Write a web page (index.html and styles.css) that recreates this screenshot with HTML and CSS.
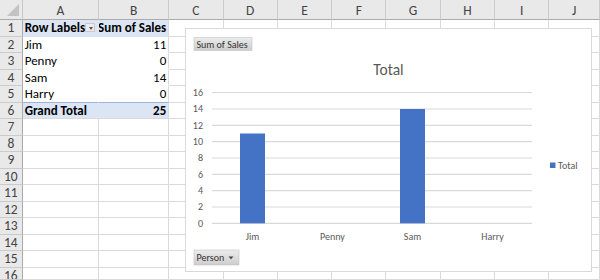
FILE: index.html
```html
<!DOCTYPE html>
<html>
<head>
<meta charset="utf-8">
<link rel="stylesheet" href="styles.css">
</head>
<body>
<div class="sheet">
  <div class="corner"><span class="tri"></span></div>
  <div class="ch">A</div><div class="ch">B</div><div class="ch">C</div><div class="ch">D</div><div class="ch">E</div><div class="ch">F</div><div class="ch">G</div><div class="ch">H</div><div class="ch">I</div><div class="ch">J</div>

  <div class="rh">1</div><div class="c pv hd noright"><span>Row Labels</span><span class="dd"></span></div><div class="c pv hd num">Sum of Sales</div><div class="c"></div><div class="c"></div><div class="c"></div><div class="c"></div><div class="c"></div><div class="c"></div><div class="c"></div><div class="c"></div>
  <div class="rh">2</div><div class="c pv noright">Jim</div><div class="c pv num">11</div><div class="c"></div><div class="c"></div><div class="c"></div><div class="c"></div><div class="c"></div><div class="c"></div><div class="c"></div><div class="c"></div>
  <div class="rh">3</div><div class="c pv noright">Penny</div><div class="c pv num">0</div><div class="c"></div><div class="c"></div><div class="c"></div><div class="c"></div><div class="c"></div><div class="c"></div><div class="c"></div><div class="c"></div>
  <div class="rh">4</div><div class="c pv noright">Sam</div><div class="c pv num">14</div><div class="c"></div><div class="c"></div><div class="c"></div><div class="c"></div><div class="c"></div><div class="c"></div><div class="c"></div><div class="c"></div>
  <div class="rh">5</div><div class="c pv last noright">Harry</div><div class="c pv last num">0</div><div class="c"></div><div class="c"></div><div class="c"></div><div class="c"></div><div class="c"></div><div class="c"></div><div class="c"></div><div class="c"></div>
  <div class="rh">6</div><div class="c pv tot noright">Grand Total</div><div class="c pv tot num">25</div><div class="c"></div><div class="c"></div><div class="c"></div><div class="c"></div><div class="c"></div><div class="c"></div><div class="c"></div><div class="c"></div>
  <div class="rh">7</div><div class="c"></div><div class="c"></div><div class="c"></div><div class="c"></div><div class="c"></div><div class="c"></div><div class="c"></div><div class="c"></div><div class="c"></div><div class="c"></div>
  <div class="rh">8</div><div class="c"></div><div class="c"></div><div class="c"></div><div class="c"></div><div class="c"></div><div class="c"></div><div class="c"></div><div class="c"></div><div class="c"></div><div class="c"></div>
  <div class="rh">9</div><div class="c"></div><div class="c"></div><div class="c"></div><div class="c"></div><div class="c"></div><div class="c"></div><div class="c"></div><div class="c"></div><div class="c"></div><div class="c"></div>
  <div class="rh">10</div><div class="c"></div><div class="c"></div><div class="c"></div><div class="c"></div><div class="c"></div><div class="c"></div><div class="c"></div><div class="c"></div><div class="c"></div><div class="c"></div>
  <div class="rh">11</div><div class="c"></div><div class="c"></div><div class="c"></div><div class="c"></div><div class="c"></div><div class="c"></div><div class="c"></div><div class="c"></div><div class="c"></div><div class="c"></div>
  <div class="rh">12</div><div class="c"></div><div class="c"></div><div class="c"></div><div class="c"></div><div class="c"></div><div class="c"></div><div class="c"></div><div class="c"></div><div class="c"></div><div class="c"></div>
  <div class="rh">13</div><div class="c"></div><div class="c"></div><div class="c"></div><div class="c"></div><div class="c"></div><div class="c"></div><div class="c"></div><div class="c"></div><div class="c"></div><div class="c"></div>
  <div class="rh">14</div><div class="c"></div><div class="c"></div><div class="c"></div><div class="c"></div><div class="c"></div><div class="c"></div><div class="c"></div><div class="c"></div><div class="c"></div><div class="c"></div>
  <div class="rh">15</div><div class="c"></div><div class="c"></div><div class="c"></div><div class="c"></div><div class="c"></div><div class="c"></div><div class="c"></div><div class="c"></div><div class="c"></div><div class="c"></div>
  <div class="rh">16</div><div class="c"></div><div class="c"></div><div class="c"></div><div class="c"></div><div class="c"></div><div class="c"></div><div class="c"></div><div class="c"></div><div class="c"></div><div class="c"></div>
</div>

<div class="chart">
  <svg width="407" height="244" viewBox="0 0 407 244">
    <defs>
      <linearGradient id="btn" x1="0" y1="0" x2="0" y2="1">
        <stop offset="0" stop-color="#ececec"/>
        <stop offset="1" stop-color="#cdcdcd"/>
      </linearGradient>
    </defs>
    <rect class="frame" x="0.5" y="0.5" width="406" height="243"/>

    <rect class="btn" x="9" y="9.5" width="58" height="13"/>
    <text class="btntxt" x="11.5" y="19.8">Sum of Sales</text>

    <text class="title" x="203.5" y="47">Total</text>

    <g class="grid">
      <line x1="27" y1="64.5" x2="347" y2="64.5"/>
      <line x1="27" y1="81" x2="347" y2="81"/>
      <line x1="27" y1="97.3" x2="347" y2="97.3"/>
      <line x1="27" y1="113.6" x2="347" y2="113.6"/>
      <line x1="27" y1="130" x2="347" y2="130"/>
      <line x1="27" y1="146.3" x2="347" y2="146.3"/>
      <line x1="27" y1="162.6" x2="347" y2="162.6"/>
      <line x1="27" y1="179" x2="347" y2="179"/>
      <line x1="27" y1="195.3" x2="347" y2="195.3"/>
    </g>
    <g class="ylab">
      <text x="18" y="68">16</text>
      <text x="18" y="84.4">14</text>
      <text x="18" y="100.7">12</text>
      <text x="18" y="117">10</text>
      <text x="18" y="133.4">8</text>
      <text x="18" y="149.7">6</text>
      <text x="18" y="166">4</text>
      <text x="18" y="182.4">2</text>
      <text x="18" y="198.7">0</text>
    </g>

    <rect class="bar" x="55" y="105.5" width="25" height="89.8"/>
    <rect class="bar" x="215" y="81" width="25" height="114.3"/>

    <g class="xlab">
      <text x="67.5" y="212">Jim</text>
      <text x="147.5" y="212">Penny</text>
      <text x="227.5" y="212">Sam</text>
      <text x="307.5" y="212">Harry</text>
    </g>

    <rect class="bar" x="365" y="134.5" width="5.5" height="5.5"/>
    <text class="legend" x="373" y="141">Total</text>

    <rect class="btn" x="9" y="222" width="45" height="15"/>
    <text class="btntxt" x="11.5" y="233.2">Person</text>
    <polygon class="arrow" points="43.5,228.5 48.5,228.5 46,231.2"/>
  </svg>
</div>
</body>
</html>
```

FILE: styles.css
```css
html, body {
  margin: 0;
  padding: 0;
  background: #ffffff;
}
body {
  position: relative;
  width: 600px;
  height: 280px;
  overflow: hidden;
  font-family: Carlito, Lato, "Liberation Sans", sans-serif;
}
.sheet {
  display: grid;
  grid-template-columns: 22.7px 76.6px 70px repeat(7, 54.3px) 1fr;
  grid-template-rows: 20px repeat(15, 16.5px) 12.5px;
  width: 600px;
  height: 280px;
  overflow: hidden;
}
.corner {
  background: #e9e9e9;
  border-right: 1px solid #c8c8c8;
  border-bottom: 1px solid #ababab;
  box-sizing: border-box;
  position: relative;
}
.tri {
  position: absolute;
  right: 3px;
  bottom: 3px;
  width: 0;
  height: 0;
  border-left: 12px solid transparent;
  border-bottom: 12px solid #c3c3c3;
}
.ch {
  background: #e9e9e9;
  border-right: 1px solid #cbcbcb;
  border-bottom: 1px solid #ababab;
  box-sizing: border-box;
  color: #444444;
  font-size: 13.5px;
  display: flex;
  align-items: center;
  justify-content: center;
  padding-top: 1px;
}
.ch:last-child {
  justify-content: flex-start;
  padding-left: 24px;
}
.rh {
  background: #e9e9e9;
  border-right: 1px solid #ababab;
  border-bottom: 1px solid #cbcbcb;
  box-sizing: border-box;
  color: #444444;
  font-size: 13.5px;
  display: flex;
  align-items: center;
  justify-content: center;
  overflow: hidden;
}
.rh:nth-last-child(11) {
  align-items: flex-start;
  padding-top: 0;
  line-height: 16px;
}
.c {
  border-right: 1px solid #dadada;
  border-bottom: 1px solid #dadada;
  box-sizing: border-box;
  font-size: 13px;
  color: #000000;
  display: flex;
  align-items: center;
  padding: 0 2px;
  white-space: nowrap;
  overflow: hidden;
}
.c.pv {
  border-bottom-color: transparent;
}
.c.noright {
  border-right-color: transparent;
}
.c.num {
  justify-content: flex-end;
}
.c.hd {
  background: #dce5f4;
  font-weight: bold;
  justify-content: space-between;
}
.c.hd.num {
  justify-content: flex-end;
}
.c.last {
  border-bottom: 1px solid #9bb3df;
}
.c.tot {
  background: #dce5f4;
  font-weight: bold;
  border-bottom: 1px solid #dadada;
}
.dd {
  width: 12px;
  height: 9px;
  background: #ececec;
  border: 1px solid #c9c9c9;
  box-sizing: border-box;
  position: relative;
  margin-right: 1px;
}
.dd::after {
  content: "";
  position: absolute;
  left: 3px;
  top: 2.5px;
  border-left: 2.5px solid transparent;
  border-right: 2.5px solid transparent;
  border-top: 3px solid #555555;
}
.chart {
  position: absolute;
  left: 185px;
  top: 28px;
  width: 407px;
  height: 244px;
}
.chart svg {
  display: block;
}
.frame {
  fill: #ffffff;
  stroke: #d9d9d9;
  stroke-width: 1;
}
.btn {
  fill: url(#btn);
  stroke: #c4c4c4;
  stroke-width: 0.6;
}
.btntxt {
  font-size: 10px;
  fill: #333333;
  font-family: Carlito, Lato, "Liberation Sans", sans-serif;
}
.arrow {
  fill: #444444;
}
.title {
  font-size: 15.5px;
  fill: #595959;
  text-anchor: middle;
  font-family: Carlito, Lato, "Liberation Sans", sans-serif;
}
.grid line {
  stroke: #d9d9d9;
  stroke-width: 1.2;
}
.ylab text {
  font-size: 10px;
  fill: #595959;
  text-anchor: end;
  font-family: Carlito, Lato, "Liberation Sans", sans-serif;
}
.xlab text {
  font-size: 10px;
  fill: #595959;
  text-anchor: middle;
  font-family: Carlito, Lato, "Liberation Sans", sans-serif;
}
.legend {
  font-size: 10px;
  fill: #595959;
  font-family: Carlito, Lato, "Liberation Sans", sans-serif;
}
.bar {
  fill: #4472c4;
}
```
